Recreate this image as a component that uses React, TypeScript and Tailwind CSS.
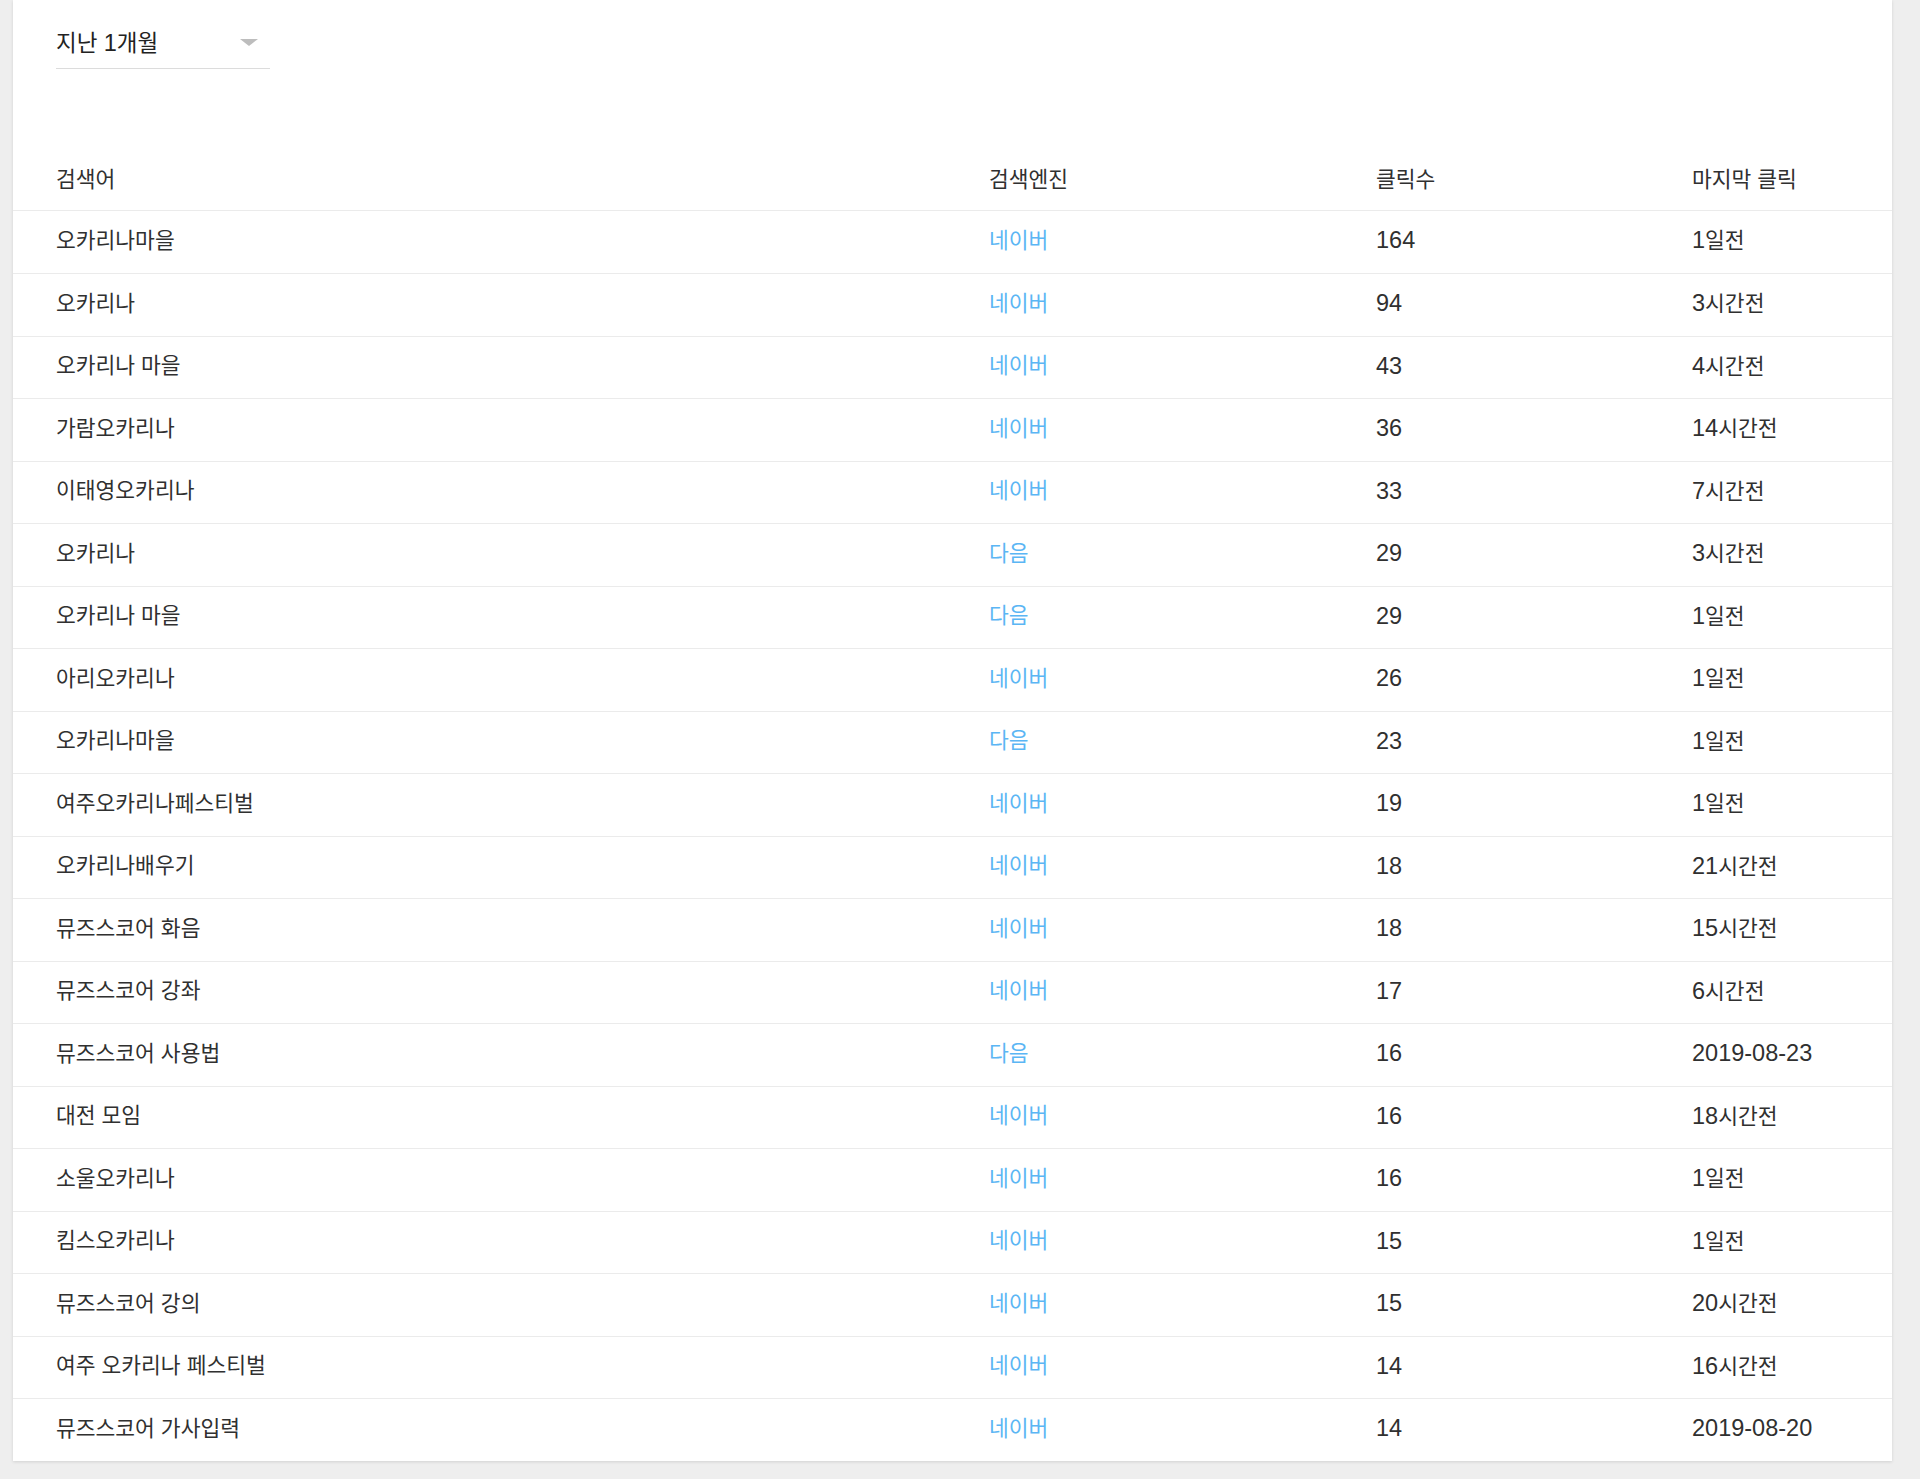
const rows: [string, string, string, string][] = [
  ['오카리나마을', '네이버', '164', '1일전'],
  ['오카리나', '네이버', '94', '3시간전'],
  ['오카리나 마을', '네이버', '43', '4시간전'],
  ['가람오카리나', '네이버', '36', '14시간전'],
  ['이태영오카리나', '네이버', '33', '7시간전'],
  ['오카리나', '다음', '29', '3시간전'],
  ['오카리나 마을', '다음', '29', '1일전'],
  ['아리오카리나', '네이버', '26', '1일전'],
  ['오카리나마을', '다음', '23', '1일전'],
  ['여주오카리나페스티벌', '네이버', '19', '1일전'],
  ['오카리나배우기', '네이버', '18', '21시간전'],
  ['뮤즈스코어 화음', '네이버', '18', '15시간전'],
  ['뮤즈스코어 강좌', '네이버', '17', '6시간전'],
  ['뮤즈스코어 사용법', '다음', '16', '2019-08-23'],
  ['대전 모임', '네이버', '16', '18시간전'],
  ['소울오카리나', '네이버', '16', '1일전'],
  ['킴스오카리나', '네이버', '15', '1일전'],
  ['뮤즈스코어 강의', '네이버', '15', '20시간전'],
  ['여주 오카리나 페스티벌', '네이버', '14', '16시간전'],
  ['뮤즈스코어 가사입력', '네이버', '14', '2019-08-20'],
];

// digits get a bigger Latin face so they line up with the Hangul widths
const Txt = ({ text }: { text: string }) => (
  <>
    {text.split(/([0-9][0-9-]*)/).map((part, i) =>
      /^[0-9]/.test(part) ? (
        <span key={i} className="text-[23.5px]">
          {part}
        </span>
      ) : (
        <span key={i}>{part}</span>
      )
    )}
  </>
);

const Row = ({ cells, header }: { cells: [string, string, string, string]; header?: boolean }) => (
  <div
    className={
      'flex items-center h-[62.5px] text-[21.5px] text-[#303030] ' +
      (header
        ? 'pt-[3px] border-b border-[#ebebeb]'
        : 'pb-[2px] border-t border-[#ebebeb] first:border-t-0')
    }
  >
    <div className="w-[976px] pl-[43px]">
      <Txt text={cells[0]} />
    </div>
    <div className={'w-[387px] ' + (header ? '' : 'text-[#5bb6f4]')}>
      <Txt text={cells[1]} />
    </div>
    <div className="w-[316px]">
      <Txt text={cells[2]} />
    </div>
    <div className="flex-1">
      <Txt text={cells[3]} />
    </div>
  </div>
);

export default function App() {
  return (
    <div
      className="min-h-[1479px] bg-[#eeeeee] pl-[13px] pr-[28px] pb-[19px]"
      style={{ fontFamily: '"Liberation Sans", "Noto Sans CJK KR", sans-serif' }}
    >
      <div className="bg-white shadow-[0_1px_3px_rgba(0,0,0,0.12)]">
        <div className="pl-[43px] pt-[28px]">
          <div className="w-[214px] h-[41px] border-b border-[#dcdcdc] flex items-start justify-between pr-[12px]">
            <span className="text-[22.5px] leading-[30px] text-[#222]">
              <Txt text="지난 1개월" />
            </span>
            <span className="mt-[11px] w-0 h-0 border-l-[9px] border-r-[9px] border-t-[7px] border-l-transparent border-r-transparent border-t-[#bdbdbd]" />
          </div>
        </div>
        <div className="mt-[79px]">
          <Row cells={['검색어', '검색엔진', '클릭수', '마지막 클릭']} header />
          <div>
            {rows.map((r, i) => (
              <Row key={i} cells={r} />
            ))}
          </div>
        </div>
      </div>
    </div>
  );
}
